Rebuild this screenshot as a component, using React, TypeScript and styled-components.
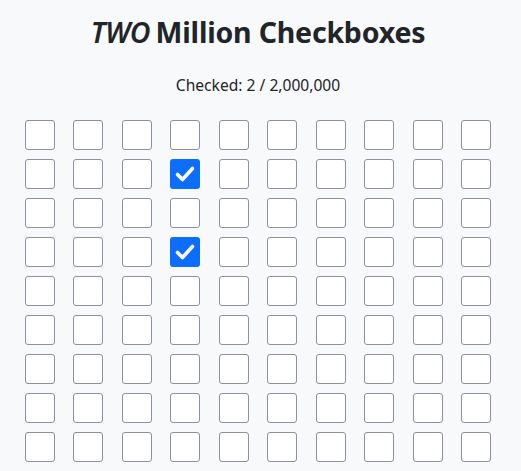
import React from "react";
import styled, { createGlobalStyle } from "styled-components";

const Global = createGlobalStyle`
  html, body { margin: 0; padding: 0; background: #f8f9fa; }
  body { font-family: "Noto Sans", "Open Sans", sans-serif; color: #212529; }
`;

const Page = styled.main`
  display: flex;
  flex-direction: column;
  align-items: center;
  padding-top: 14px;
  padding-right: 5px;
`;

const Title = styled.h1`
  margin: 0;
  font-size: 28.5px;
  font-weight: 700;
  line-height: 36px;
  letter-spacing: -0.2px;
`;

const Em = styled.em`
  font-style: italic;
  font-weight: 600;
  margin-right: -2px;
`;

const Counter = styled.p`
  margin: 24px 0 0;
  font-size: 15.6px;
  line-height: 22px;
`;

const Grid = styled.div`
  margin-top: 24px;
  display: grid;
  grid-template-columns: repeat(10, 30px);
  column-gap: 18.44px;
  row-gap: 9px;
`;

const Box = styled.span<{ $checked: boolean }>`
  box-sizing: border-box;
  width: 30px;
  height: 30px;
  border-radius: 3px;
  border: ${(p) => (p.$checked ? "none" : "1px solid #8f8f9d")};
  background: ${(p) => (p.$checked ? "#0d6efd" : "#fff")};
  display: flex;
  align-items: center;
  justify-content: center;
`;

const Check = () => (
  <svg width="24" height="24" viewBox="0 0 24 24" fill="none">
    <path d="M4.5 12.5l5 5 10-11" stroke="#fff" strokeWidth="3.6" strokeLinecap="round" strokeLinejoin="round" />
  </svg>
);

const checked = new Set([13, 33]);

export default function App() {
  const cells = Array.from({ length: 90 }, (_, i) => i);
  return (
    <>
      <Global />
      <Page>
        <Title>
          <Em>TWO</Em> Million Checkboxes
        </Title>
        <Counter>Checked: 2 / 2,000,000</Counter>
        <Grid>
          {cells.map((i) => (
            <Box key={i} $checked={checked.has(i)}>
              {checked.has(i) && <Check />}
            </Box>
          ))}
        </Grid>
      </Page>
    </>
  );
}
